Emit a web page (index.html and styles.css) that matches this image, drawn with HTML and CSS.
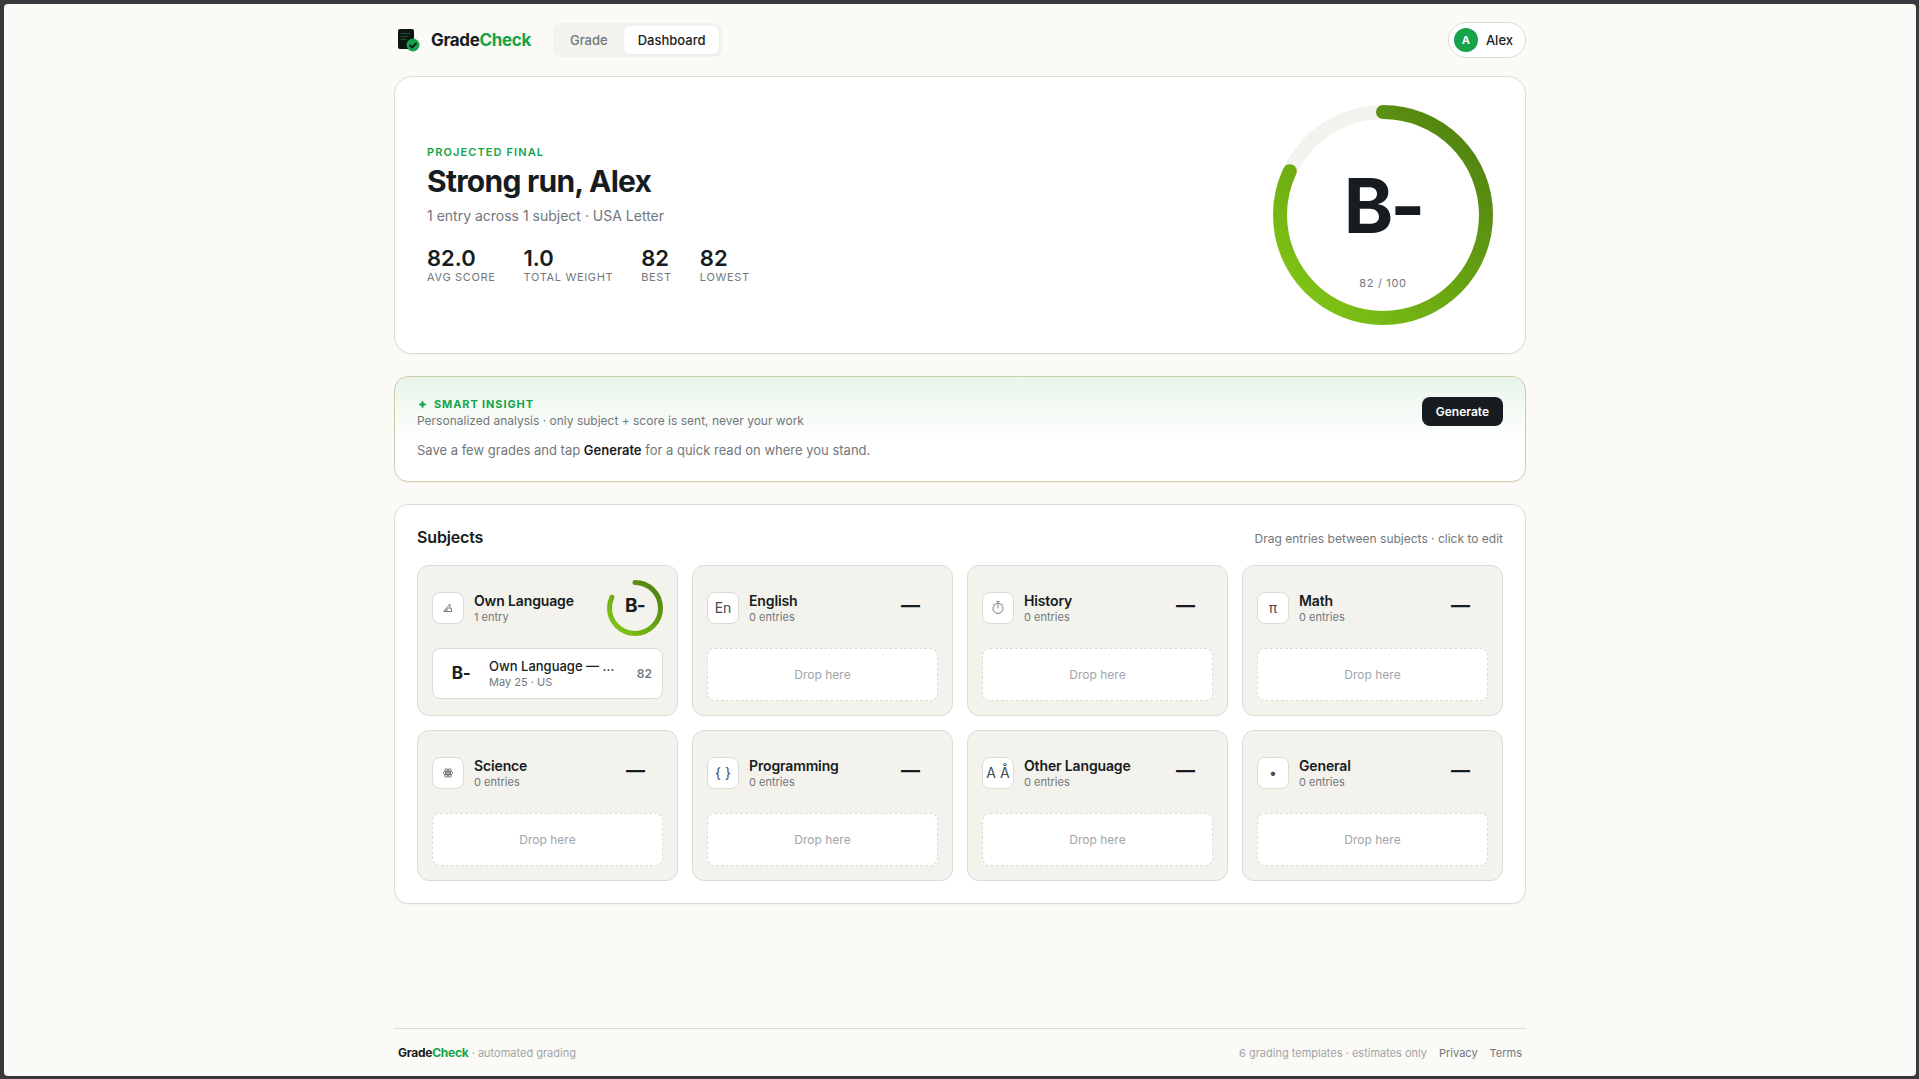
FILE: index.html
```html
<!DOCTYPE html>
<html lang="en">
  <head>
    <meta charset="UTF-8" />
    <meta name="viewport" content="width=device-width, initial-scale=1" />
    <title>GradeCheck - Dashboard</title>
    <link rel="stylesheet" href="styles.css">
  </head>
  <body>
    <header class="topbar">
      <a href="#" class="brand">
        <svg class="brand-icon" viewBox="0 0 24 24" aria-hidden="true">
          <rect x="1" y="1" width="16" height="20" rx="2" fill="#0f1512" />
          <path d="M3.500 5.500h10M3.500 8.500h8M3.500 11.500h6" stroke="#14532d" stroke-width="1" />
          <circle cx="16" cy="17" r="6.500" fill="#16a34a" />
          <path d="M12.500 17l2.500 2.500 4.500-4.500" fill="none" stroke="#0f1512" stroke-width="1.800" />
        </svg>
        <span class="brand-name">Grade<span class="green">Check</span></span>
      </a>
      <nav class="tabs">
        <button class="tab">Grade</button>
        <button class="tab active">Dashboard</button>
      </nav>
      <button class="profile"><span class="avatar">A</span>Alex</button>
    </header>

    <main>
      <section class="card hero">
        <div>
          <div class="eyebrow">Projected final</div>
          <h1>Strong run, Alex</h1>
          <p class="hero-sub">1 entry across 1 subject · USA Letter</p>
          <div class="stats">
            <div class="stat"><strong>82.0</strong><span>Avg score</span></div>
            <div class="stat"><strong>1.0</strong><span>Total weight</span></div>
            <div class="stat"><strong>82</strong><span>Best</span></div>
            <div class="stat"><strong>82</strong><span>Lowest</span></div>
          </div>
        </div>
        <div class="ring">
          <svg viewBox="0 0 220 220" aria-hidden="true">
            <defs>
              <linearGradient id="grade" x1="0" y1="0" x2="1" y2="1">
                <stop offset="0" stop-color="#84cc16" />
                <stop offset="1" stop-color="#4d7c0f" />
              </linearGradient>
            </defs>
            <circle class="ring-track" cx="110" cy="110" r="103" />
            <circle class="ring-fill" cx="110" cy="110" r="103" pathLength="100" />
          </svg>
          <div class="ring-grade">B-</div>
          <div class="ring-score">82 / 100</div>
        </div>
      </section>

      <section class="card insight">
        <div class="insight-head">
          <div>
            <div class="eyebrow strong">
              <svg class="spark" viewBox="0 0 12 12" aria-hidden="true">
                <path d="M6 2Q6.400 5.600 10 6Q6.400 6.400 6 10Q5.600 6.400 2 6Q5.600 5.600 6 2Z" fill="currentColor" stroke="currentColor" stroke-width=".8" />
              </svg>
              Smart insight
            </div>
            <p class="note">Personalized analysis · only subject + score is sent, never your work</p>
          </div>
          <button class="generate">Generate</button>
        </div>
        <p class="insight-body">Save a few grades and tap <strong>Generate</strong> for a quick read on where you stand.</p>
      </section>

      <section class="card subjects">
        <div class="subjects-head">
          <h2>Subjects</h2>
          <p class="note">Drag entries between subjects · click to edit</p>
        </div>
        <div class="grid">
          <article class="subject">
            <div class="subject-head">
              <span class="icon">
                <svg viewBox="0 0 16 16" aria-hidden="true">
                  <path d="M3.500 11.500L10 4M4 11.500h8M5 10.500L8.500 8M10 4.500V8M8.500 8l3 .5v3M7 11V9.500" />
                </svg>
              </span>
              <div class="subject-name"><h3>Own Language</h3><p>1 entry</p></div>
              <div class="mini-ring">
                <svg viewBox="0 0 56 56" aria-hidden="true">
                  <circle class="ring-fill" cx="28" cy="28" r="25.500" pathLength="100" />
                </svg>
                <span>B-</span>
              </div>
            </div>
            <button class="entry">
              <span class="entry-grade">B-</span>
              <span class="entry-text">
                <span class="entry-title">Own Language — Essay</span>
                <span class="entry-meta">May 25 · US</span>
              </span>
              <span class="entry-score">82</span>
            </button>
          </article>
          <article class="subject">
            <div class="subject-head">
              <span class="icon">En</span>
              <div class="subject-name"><h3>English</h3><p>0 entries</p></div>
              <div class="mini-ring"><span>—</span></div>
            </div>
            <div class="drop">Drop here</div>
          </article>
          <article class="subject">
            <div class="subject-head">
              <span class="icon">
                <svg viewBox="0 0 16 16" aria-hidden="true">
                  <circle cx="8" cy="8.500" r="5" /><path d="M8 8.500V4.500M6.500 1.500h3M8 1.500v2M12 3.500l1 1M4 3.500L3 4.500" />
                </svg>
              </span>
              <div class="subject-name"><h3>History</h3><p>0 entries</p></div>
              <div class="mini-ring"><span>—</span></div>
            </div>
            <div class="drop">Drop here</div>
          </article>
          <article class="subject">
            <div class="subject-head">
              <span class="icon">π</span>
              <div class="subject-name"><h3>Math</h3><p>0 entries</p></div>
              <div class="mini-ring"><span>—</span></div>
            </div>
            <div class="drop">Drop here</div>
          </article>
          <article class="subject">
            <div class="subject-head">
              <span class="icon">
                <svg viewBox="0 0 16 16" aria-hidden="true">
                  <ellipse cx="8" cy="8" rx="4.800" ry="2" />
                  <ellipse cx="8" cy="8" rx="4.800" ry="2" transform="rotate(60 8 8)" />
                  <ellipse cx="8" cy="8" rx="4.800" ry="2" transform="rotate(120 8 8)" />
                  <circle cx="8" cy="8" r="1" />
                </svg>
              </span>
              <div class="subject-name"><h3>Science</h3><p>0 entries</p></div>
              <div class="mini-ring"><span>—</span></div>
            </div>
            <div class="drop">Drop here</div>
          </article>
          <article class="subject">
            <div class="subject-head">
              <span class="icon">{ }</span>
              <div class="subject-name"><h3>Programming</h3><p>0 entries</p></div>
              <div class="mini-ring"><span>—</span></div>
            </div>
            <div class="drop">Drop here</div>
          </article>
          <article class="subject">
            <div class="subject-head">
              <span class="icon">A Å</span>
              <div class="subject-name"><h3>Other Language</h3><p>0 entries</p></div>
              <div class="mini-ring"><span>—</span></div>
            </div>
            <div class="drop">Drop here</div>
          </article>
          <article class="subject">
            <div class="subject-head">
              <span class="icon">•</span>
              <div class="subject-name"><h3>General</h3><p>0 entries</p></div>
              <div class="mini-ring"><span>—</span></div>
            </div>
            <div class="drop">Drop here</div>
          </article>
        </div>
      </section>
    </main>

    <footer>
      <div><strong>Grade<span class="green">Check</span></strong> · automated grading</div>
      <div class="footer-links">
        <span>6 grading templates · estimates only</span>
        <a href="#">Privacy</a>
        <a href="#">Terms</a>
      </div>
    </footer>
  </body>
</html>
```
FILE: styles.css
```css
:root {
  --ink: #171c20;
  --muted: #72777b;
  --faint: #a0a5a9;
  --line: #dcdcd6;
  --soft: #f3f2ed;
  --green: #16a34a;
}
* {
  box-sizing: border-box;
}
html {
  background: #3b393e;
}
body {
  display: flex;
  flex-direction: column;
  margin: 4px 3px 3px 4px;
  min-height: calc(100vh - 7px);
  border-radius: 4px;
  background: #fbfaf6;
  color: var(--ink);
  font-family: Inter, "Liberation Sans", sans-serif;
  font-size: 13px;
}
h1, h2, h3, p {
  margin: 0;
}
button {
  font: inherit;
  color: inherit;
  cursor: pointer;
}
a {
  color: inherit;
  text-decoration: none;
}
.green {
  color: var(--green);
}
.topbar,
main,
footer {
  width: 100%;
  max-width: 1132px;
  margin: 0 auto;
}

/* top bar */
.topbar {
  display: flex;
  align-items: center;
  padding: 18px 0;
}
.brand {
  display: flex;
  align-items: center;
  gap: 10px;
  padding-left: 3px;
}
.brand-icon {
  width: 24px;
  height: 24px;
}
.brand-name {
  font-size: 17px;
  font-weight: 700;
  letter-spacing: -0.02em;
}
.tabs {
  display: flex;
  gap: 2px;
  margin-left: 22px;
  padding: 3px;
  border-radius: 8px;
  background: var(--soft);
}
.tab {
  height: 28px;
  padding: 0 14px;
  border: 0;
  border-radius: 6px;
  background: none;
  color: var(--muted);
  font-weight: 500;
}
.tab.active {
  background: #fff;
  color: var(--ink);
  box-shadow: 0 1px 2px rgba(0, 0, 0, 0.05);
}
.profile {
  display: flex;
  align-items: center;
  gap: 8px;
  height: 36px;
  margin-left: auto;
  padding: 0 12px 0 5px;
  border: 1px solid var(--line);
  border-radius: 18px;
  background: #fff;
  font-weight: 500;
}
.avatar {
  width: 24px;
  border-radius: 50%;
  background: var(--green);
  color: #fff;
  font-size: 11px;
  font-weight: 700;
  line-height: 24px;
}

/* cards */
main {
  display: flex;
  flex-direction: column;
  gap: 22px;
}
.card {
  border: 1px solid var(--line);
  border-radius: 14px;
  background: #fff;
  box-shadow: 0 1px 2px rgba(0, 0, 0, 0.04);
}
.eyebrow {
  color: var(--green);
  font-size: 11px;
  font-weight: 600;
  line-height: 14px;
  letter-spacing: 0.1em;
  text-transform: uppercase;
}
.eyebrow.strong {
  display: flex;
  align-items: center;
  gap: 6px;
  font-weight: 700;
  letter-spacing: 0.08em;
}
.note {
  color: var(--muted);
  font-size: 12px;
  line-height: 18px;
}

/* hero */
.hero {
  display: flex;
  align-items: center;
  justify-content: space-between;
  padding: 28px 32px;
  border-radius: 18px;
}
h1 {
  margin-top: 4px;
  font-size: 30px;
  font-weight: 700;
  line-height: 36px;
  letter-spacing: -0.025em;
}
.hero-sub {
  margin-top: 7px;
  color: var(--muted);
  font-size: 14px;
  line-height: 20px;
}
.stats {
  display: flex;
  gap: 28px;
  margin-top: 20px;
}
.stat {
  display: flex;
  flex-direction: column;
}
.stat strong {
  font-size: 22px;
  font-weight: 600;
  line-height: 24px;
}
.stat span {
  color: var(--muted);
  font-size: 11px;
  line-height: 15px;
  letter-spacing: 0.06em;
  text-transform: uppercase;
}
.ring {
  position: relative;
  width: 220px;
  height: 220px;
}
.ring svg,
.mini-ring svg {
  display: block;
  transform: rotate(-90deg);
}
.ring circle {
  fill: none;
  stroke-width: 14;
}
.ring-track {
  stroke: var(--soft);
}
.ring-fill {
  fill: none;
  stroke: url(#grade);
  stroke-linecap: round;
  stroke-dasharray: 82 100;
}
/* grade and score are laid over the ring */
.ring-grade {
  position: absolute;
  inset: 0 0 18px;
  font-size: 75px;
  font-weight: 700;
  line-height: 202px;
  letter-spacing: -0.04em;
  text-align: center;
}
.ring-score {
  position: absolute;
  inset: auto 0 34px;
  color: var(--muted);
  font-size: 11px;
  line-height: 16px;
  letter-spacing: 0.06em;
  text-align: center;
}

/* insight */
.insight {
  padding: 20px 22px;
  border-color: #d0cda9;
  background: linear-gradient(#e8f5ea, #fff 60%);
}
.insight-head {
  display: flex;
  align-items: flex-start;
  justify-content: space-between;
}
.insight .note {
  line-height: 20px;
}
.spark {
  width: 11px;
  height: 11px;
}
.generate {
  height: 29px;
  padding: 0 14px;
  border: 0;
  border-radius: 8px;
  background: var(--ink);
  color: #fff;
  font-size: 12px;
  font-weight: 600;
}
.insight-body {
  margin-top: 9px;
  padding-bottom: 1px;
  color: var(--muted);
  line-height: 20px;
}
.insight-body strong {
  color: var(--ink);
  font-weight: 600;
}

/* subjects */
.subjects {
  padding: 21px 22px 22px;
}
.subjects-head {
  display: flex;
  align-items: baseline;
  justify-content: space-between;
  margin-bottom: 17px;
}
h2 {
  font-size: 16px;
  font-weight: 600;
  line-height: 22px;
  letter-spacing: -0.01em;
}
.grid {
  display: grid;
  grid-template-columns: repeat(4, minmax(0, 1fr));
  gap: 14px;
}
.subject {
  display: flex;
  flex-direction: column;
  gap: 12px;
  padding: 14px;
  border: 1px solid var(--line);
  border-radius: 12px;
  background: var(--soft);
}
.subject-head {
  display: flex;
  align-items: center;
  gap: 10px;
}
.icon {
  display: flex;
  align-items: center;
  justify-content: center;
  width: 32px;
  height: 32px;
  border: 1px solid var(--line);
  border-radius: 8px;
  background: #fff;
  color: #454b50;
  font-size: 14px;
  line-height: 16px;
  white-space: nowrap;
}
.icon svg {
  width: 16px;
  height: 16px;
  fill: none;
  stroke: #5b6065;
  stroke-width: 0.8;
}
.subject-name {
  flex: 1;
}
h3 {
  font-size: 14px;
  font-weight: 600;
  line-height: 18px;
  letter-spacing: -0.01em;
}
.subject-name p {
  color: var(--muted);
  font-size: 11px;
  line-height: 14px;
}
.mini-ring {
  position: relative;
  width: 56px;
  height: 56px;
}
.mini-ring circle {
  stroke-width: 5;
}
.mini-ring span {
  position: absolute;
  inset: 0 0 4px;
  font-size: 19px;
  font-weight: 700;
  line-height: 52px;
  letter-spacing: -0.04em;
  text-align: center;
}
.drop {
  height: 53px;
  border: 1px dashed var(--line);
  border-radius: 8px;
  background: #fff;
  color: var(--faint);
  font-size: 12px;
  line-height: 51px;
  text-align: center;
}
.entry {
  display: flex;
  align-items: center;
  gap: 10px;
  padding: 8px 10px 9px;
  border: 1px solid var(--line);
  border-radius: 8px;
  background: #fff;
  text-align: left;
}
.entry-grade {
  width: 36px;
  font-size: 17px;
  font-weight: 700;
  letter-spacing: -0.02em;
  text-align: center;
}
.entry-text {
  display: flex;
  flex: 1;
  flex-direction: column;
  min-width: 0;
}
.entry-title {
  overflow: hidden;
  font-weight: 500;
  line-height: 18px;
  text-overflow: ellipsis;
  white-space: nowrap;
}
.entry-meta {
  color: var(--muted);
  font-size: 11px;
  font-weight: 400;
  line-height: 14px;
}
.entry-score {
  padding-left: 10px;
  color: var(--muted);
  font-size: 12px;
  font-weight: 600;
}

footer {
  display: flex;
  align-items: center;
  justify-content: space-between;
  margin-top: auto;
  padding: 16px 4px 15px;
  border-top: 1px solid var(--line);
  color: var(--faint);
  font-size: 11px;
  line-height: 16px;
}
footer strong {
  color: var(--ink);
  font-size: 12px;
  font-weight: 700;
  letter-spacing: -0.02em;
}
.footer-links {
  display: flex;
  gap: 12px;
}
.footer-links a {
  color: var(--muted);
}
```
